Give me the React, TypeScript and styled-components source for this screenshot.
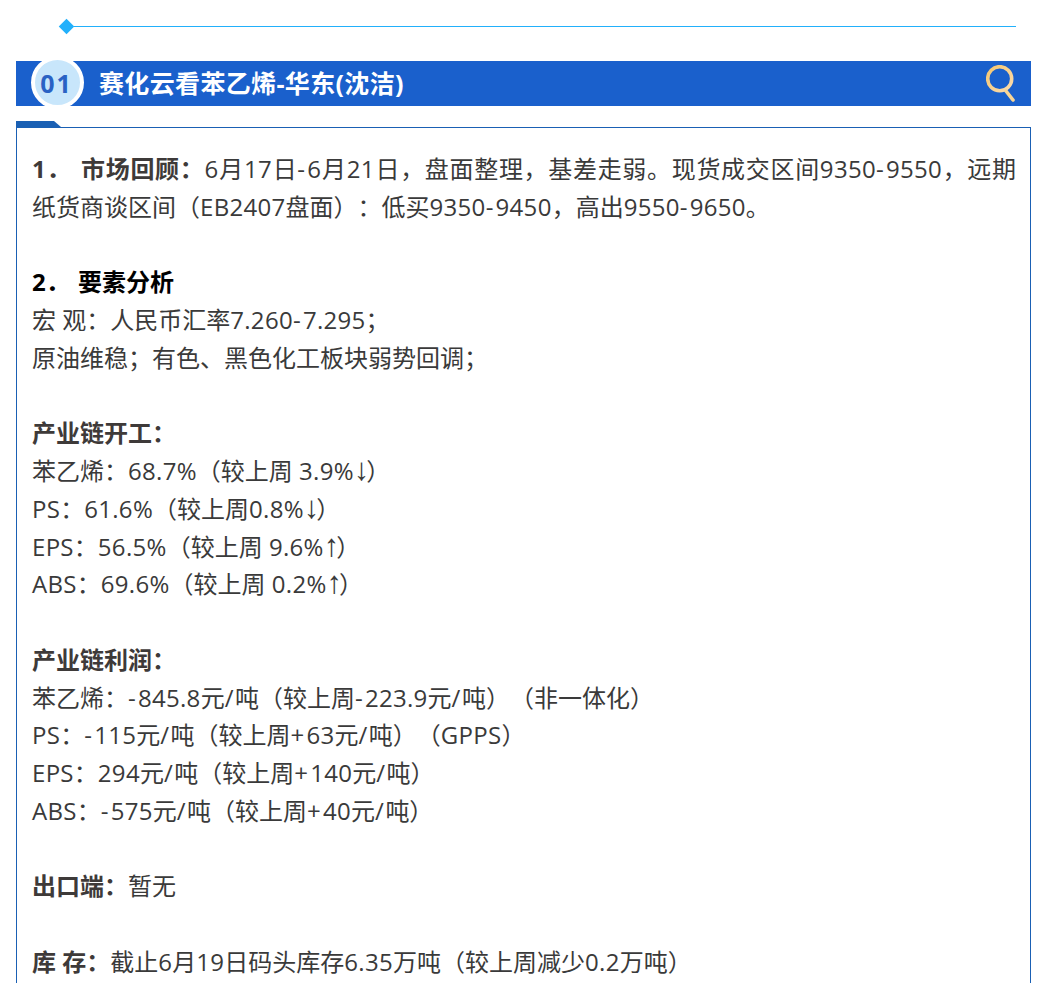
import React from 'react';
import { createGlobalStyle, styled } from 'styled-components';

const GlobalStyle = createGlobalStyle`
  html, body {
    margin: 0;
    padding: 0;
    height: 983px;
    overflow: hidden;
    background: #fff;
  }
`;

const Page = styled.div`
  width: 1048px;
  height: 983px;
  overflow: hidden;
  box-sizing: border-box;
  padding: 18px 17px 0 16px;
  font-family: 'Open Sans', 'Noto Sans CJK SC', sans-serif;
  text-spacing-trim: space-all;
`;

const Divider = styled.div`
  display: flex;
  align-items: center;
  height: 16px;
  padding: 0 15px 0 43px;
`;

const Diamond = styled.span`
  width: 11px;
  height: 11px;
  margin: 0 2px;
  flex: none;
  background: #22b0fb;
  transform: rotate(45deg);
`;

const DividerLine = styled.span`
  flex: 1;
  height: 1px;
  background: #22b0fb;
`;

const Banner = styled.div`
  position: relative;
  display: flex;
  align-items: center;
  justify-content: space-between;
  height: 45px;
  margin-top: 27px;
  padding: 0 15px 0 83px;
  background: #1a60cc;
`;

const Badge = styled.span`
  position: absolute;
  left: 15px;
  top: -5px;
  box-sizing: content-box;
  width: 43px;
  height: 45px;
  padding-right: 2px;
  border: 4px solid #fff;
  border-radius: 50%;
  background: #c8e6fb;
  display: flex;
  align-items: center;
  justify-content: center;
  color: #2a62c4;
  font-size: 25px;
  font-weight: 700;
  letter-spacing: 2px;
`;

const BannerTitle = styled.h2`
  margin: 0;
  color: #fff;
  font-size: 25px;
  font-weight: 700;
  line-height: 45px;
  letter-spacing: 0.35px;
`;

const Card = styled.section`
  position: relative;
  margin-top: 21px;
  border: 1px solid #1a60b4;
  padding: 22px 14px 0 15px;
  height: 900px;
  color: #3a3a3a;
  font-size: 24px;
  line-height: 37.76px;

  &::before {
    content: '';
    position: absolute;
    left: -1px;
    top: -7px;
    width: 45px;
    height: 6px;
    background: #1a60b4;
    clip-path: polygon(0 0, 38px 0, 100% 100%, 0 100%);
  }
`;

const Line = styled.p<{ $justify?: boolean }>`
  margin: 0;
  min-height: 37.76px;
  text-align: ${(props) => (props.$justify ? 'justify' : 'left')};
  text-align-last: ${(props) => (props.$justify ? 'justify' : 'auto')};
`;

const Strong = styled.strong<{ $dark?: boolean }>`
  font-weight: 700;
  color: ${(props) => (props.$dark ? '#000' : '#3e3a39')};
`;

const IndexNo = styled.span<{ $gap: number }>`
  margin-right: ${(props) => props.$gap}px;
`;

const Latin = styled.span`
  letter-spacing: 0.3px;
`;

const Sign = styled.span<{ $spacing: number }>`
  letter-spacing: ${(props) => props.$spacing}px;
`;

const Arrow = styled.span`
  font-family: 'Liberation Sans', sans-serif;
  font-size: 31px;
  line-height: 0;
  letter-spacing: -3px;
`;

// digits sit a bit wider than the CJK grid, signs wider still, arrows are narrow
function Mixed({ text }: { text: string }) {
  const parts = text.split(/([A-Za-z0-9.,%]+|[+\-/]|[↑↓])/);
  return (
    <>
      {parts.map((part, i) => {
        if (!(i % 2)) return part;
        if (part === '↑' || part === '↓') return <Arrow key={i}>{part}</Arrow>;
        if (part === '/') return <Sign key={i} $spacing={1.5}>{part}</Sign>;
        if (part === '+' || part === '-') return <Sign key={i} $spacing={2.2}>{part}</Sign>;
        return <Latin key={i}>{part}</Latin>;
      })}
    </>
  );
}

function SearchIcon() {
  return (
    <svg width="30" height="37" viewBox="0 0 30 37" fill="none">
      <defs>
        <linearGradient id="searchGold" x1="0" y1="0" x2="1" y2="1">
          <stop offset="0" stopColor="#f5c66f" />
          <stop offset="1" stopColor="#fbdcae" />
        </linearGradient>
      </defs>
      <circle cx="13.7" cy="13.7" r="12" stroke="url(#searchGold)" strokeWidth="3.6" />
      <path d="M20 26 L27 35" stroke="#f8d596" strokeWidth="3.6" strokeLinecap="round" />
    </svg>
  );
}

const App = () => (
  <Page>
    <GlobalStyle />
    <Divider>
      <Diamond />
      <DividerLine />
    </Divider>
    <Banner>
      <Badge>01</Badge>
      <BannerTitle>赛化云看苯乙烯-华东(沈洁)</BannerTitle>
      <SearchIcon />
    </Banner>
    <Card>
      <Line $justify>
        <Strong><IndexNo $gap={3}>1．</IndexNo> 市场回顾：</Strong>
        <Mixed text="6月17日-6月21日，盘面整理，基差走弱。现货成交区间9350-9550，远期" />
      </Line>
      <Line><Mixed text="纸货商谈区间（EB2407盘面）：低买9350-9450，高出9550-9650。" /></Line>
      <Line />
      <Line>
        <Strong $dark><IndexNo $gap={2}>2．</IndexNo> 要素分析</Strong>
      </Line>
      <Line><Mixed text="宏 观：人民币汇率7.260-7.295；" /></Line>
      <Line>原油维稳；有色、黑色化工板块弱势回调；</Line>
      <Line />
      <Line>
        <Strong>产业链开工：</Strong>
      </Line>
      <Line><Mixed text="苯乙烯：68.7%（较上周 3.9%↓）" /></Line>
      <Line><Mixed text="PS：61.6%（较上周0.8%↓）" /></Line>
      <Line><Mixed text="EPS：56.5%（较上周 9.6%↑）" /></Line>
      <Line><Mixed text="ABS：69.6%（较上周 0.2%↑）" /></Line>
      <Line />
      <Line>
        <Strong>产业链利润：</Strong>
      </Line>
      <Line><Mixed text="苯乙烯：-845.8元/吨（较上周-223.9元/吨）（非一体化）" /></Line>
      <Line><Mixed text="PS：-115元/吨（较上周+63元/吨）（GPPS）" /></Line>
      <Line><Mixed text="EPS：294元/吨（较上周+140元/吨）" /></Line>
      <Line><Mixed text="ABS：-575元/吨（较上周+40元/吨）" /></Line>
      <Line />
      <Line>
        <Strong>出口端：</Strong>暂无
      </Line>
      <Line />
      <Line>
        <Strong>库 存：</Strong>
        <Mixed text="截止6月19日码头库存6.35万吨（较上周减少0.2万吨）" />
      </Line>
    </Card>
  </Page>
);

export default App;
